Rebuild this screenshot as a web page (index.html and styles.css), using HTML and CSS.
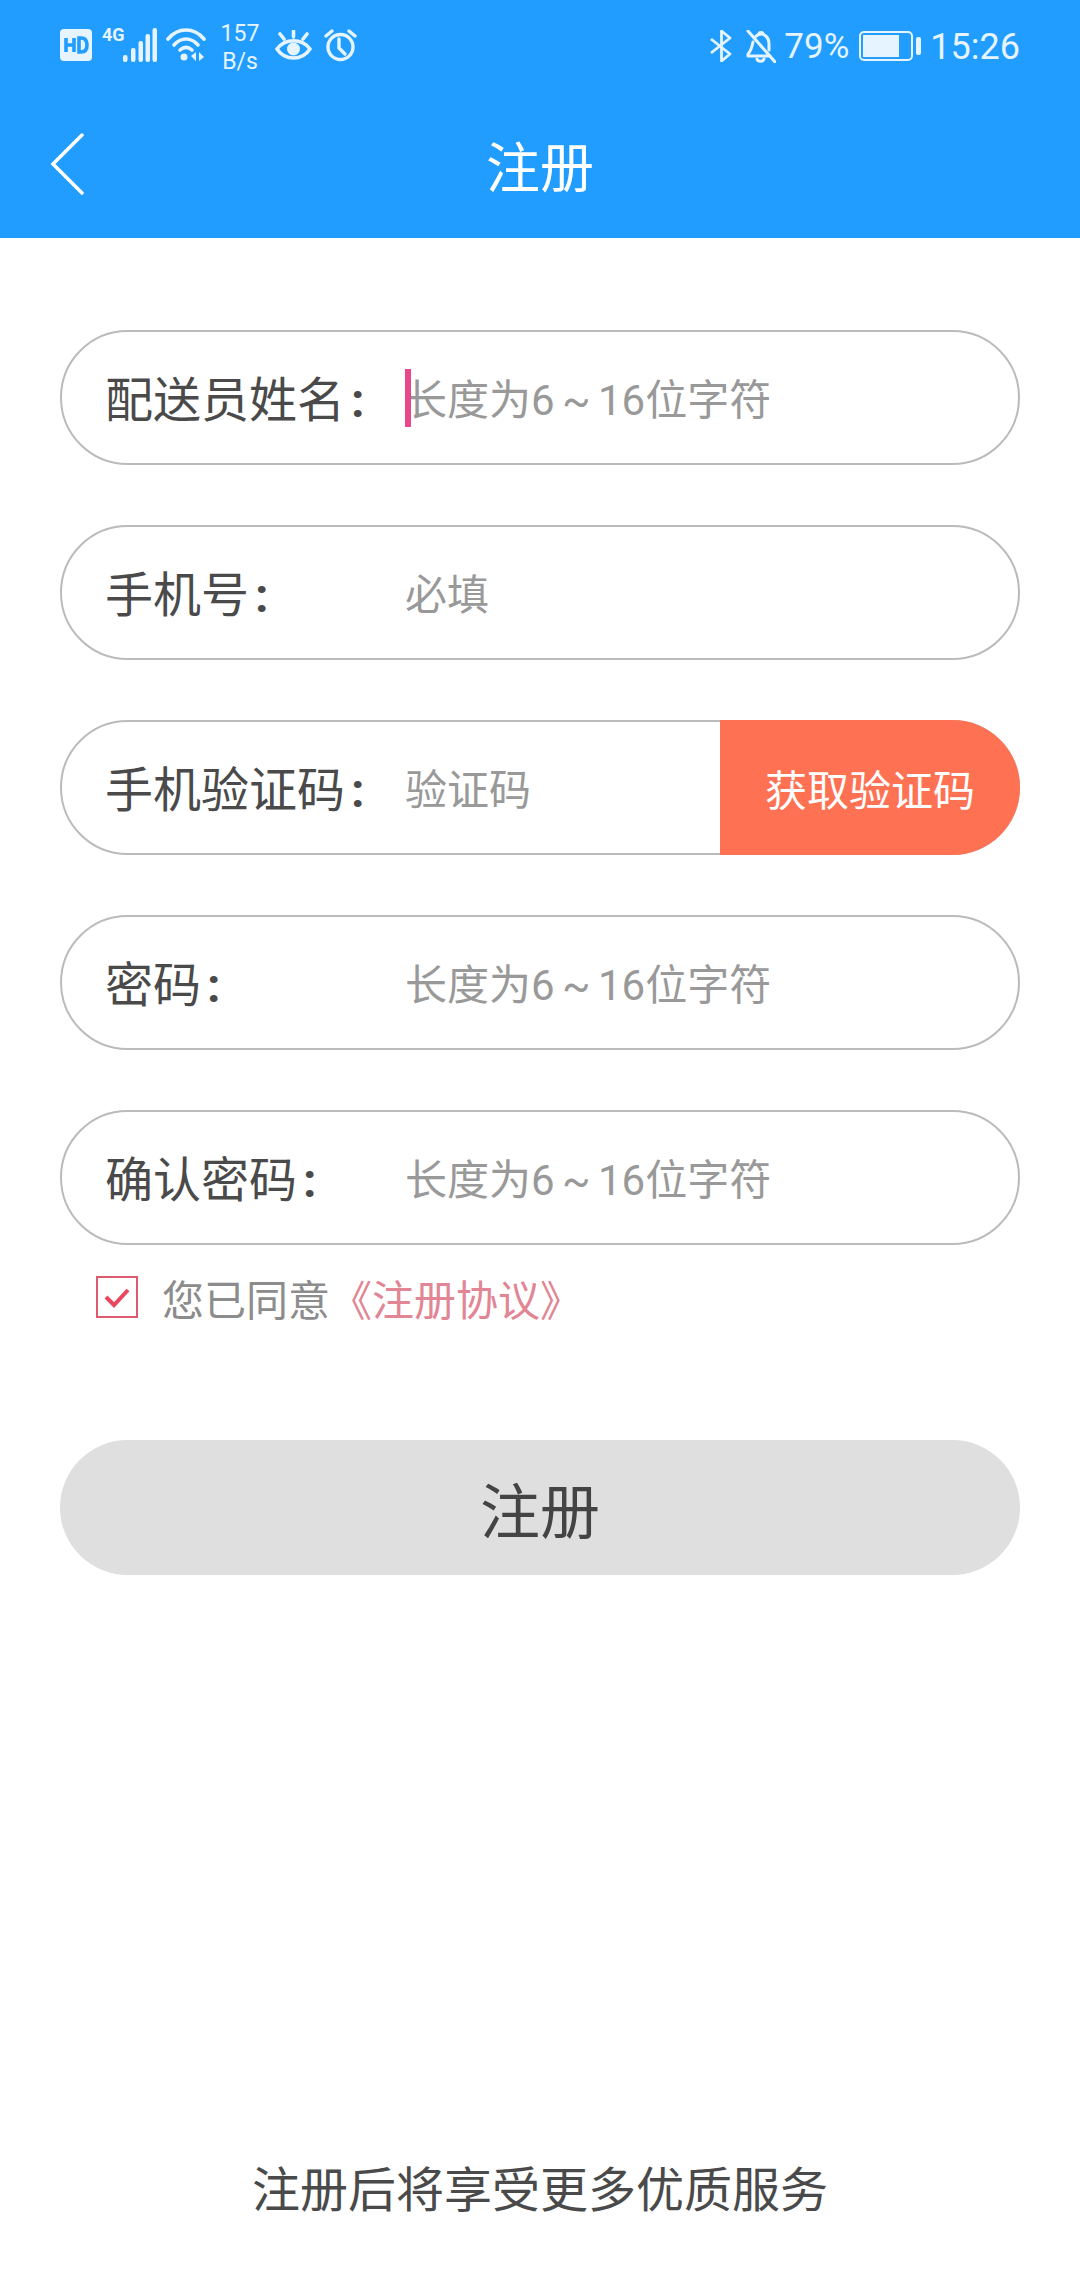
FILE: index.html
```html
<!DOCTYPE html>
<html lang="zh-CN">
<head>
    <meta charset="UTF-8">
    <meta name="viewport" content="width=device-width, initial-scale=1.0">
    <title>注册</title>
    <link rel="stylesheet" href="styles.css">
</head>
<body>
    <header class="top">
        <div class="status">
            <div class="status-left">
                <svg class="ic-hd" width="32" height="32" viewBox="0 0 32 32"><rect width="32" height="32" rx="4" fill="#e6f4ff"/><path d="M6 9v14M14 9v14M6 16h8" stroke="#209dff" stroke-width="3.600" fill="none"/><path d="M19 9v14h2c4 0 6-2.500 6-7s-2-7-6-7z" stroke="#209dff" stroke-width="3.600" fill="none"/></svg>
                <div class="net">
                    <span class="net-label">4G</span>
                    <svg width="35" height="34" viewBox="0 0 35 34"><g fill="#e6f4ff"><rect x="1" y="27" width="4.500" height="7" rx="2"/><rect x="9" y="20" width="4.500" height="14" rx="2"/><rect x="16.500" y="13" width="4.500" height="21" rx="2"/><rect x="23.500" y="6" width="4.500" height="28" rx="2"/><rect x="30.500" y="0" width="4.500" height="34" rx="2"/></g></svg>
                </div>
                <svg class="ic-wifi" width="40" height="34" viewBox="0 0 40 34"><g fill="none" stroke="#e6f4ff" stroke-width="3.600" stroke-linecap="round"><path d="M2 11C12 -1 28 -1 38 11"/><path d="M8 17c7-8 17-8 24 0"/><path d="M14 22c4-3.500 8-3.500 12 0"/></g><circle cx="18" cy="29" r="3.500" fill="#e6f4ff"/><path d="M30 24v9l-5-5zM33 24l5 5-5 4z" fill="#e6f4ff"/></svg>
                <div class="speed"><span>157</span><span>B/s</span></div>
                <svg class="ic-eye" width="37" height="33" viewBox="0 0 37 33"><g fill="none" stroke="#e6f4ff" stroke-width="3.600" stroke-linecap="round"><path d="M2 19C10 8 27 8 35 19C27 31 10 31 2 19z"/><path d="M18.500 1v6M5 4l4 5M32 4l-4 5"/></g><circle cx="18.500" cy="19" r="6.500" fill="#e6f4ff"/></svg>
                <svg class="ic-alarm" width="33" height="33" viewBox="0 0 33 33"><g fill="none" stroke="#e6f4ff" stroke-width="3.400" stroke-linecap="round"><circle cx="16.500" cy="18" r="12.500"/><path d="M15 10v9l6 6"/><path d="M2 7l6-5M31 7l-6-5"/></g></svg>
            </div>
            <div class="status-right">
                <svg class="ic-bt" width="22" height="32" viewBox="0 0 22 32"><path d="M1 9l19 15-8.500 7V1L20 8 1 23" fill="none" stroke="#e6f4ff" stroke-width="2.800" stroke-linejoin="round"/></svg>
                <svg class="ic-bell" width="30" height="33" viewBox="0 0 30 33"><g fill="none" stroke="#e6f4ff" stroke-width="3" stroke-linecap="round" stroke-linejoin="round"><path d="M9 7c2-2 4-3 6-3s8 2 8 10v6"/><path d="M7 12c-1 5-2 9-5 12v2h22"/><path d="M13 4c0-2 4-2 4 0"/><path d="M11 29c1 3 6 3 7 0"/><path d="M2 1l27 31"/></g></svg>
                <span class="pct">79%</span>
                <div class="battery">
                    <div class="battery-body"><div class="battery-fill"></div></div>
                    <div class="battery-nub"></div>
                </div>
                <span class="clock">15:26</span>
            </div>
        </div>
        <div class="nav">
            <svg class="back" width="34" height="62" viewBox="0 0 34 62"><path d="M32 2L3 31l29 29" fill="none" stroke="#fff" stroke-width="3.500" stroke-linecap="round"/></svg>
            <h1 class="nav-title">注册</h1>
        </div>
    </header>

    <form class="form">
        <div class="field">
            <label class="field-label">配送员姓名<span class="colon">:</span></label>
            <span class="field-hint"><i class="caret"></i>长度为6 ~ 16位字符</span>
        </div>
        <div class="field">
            <label class="field-label">手机号<span class="colon">:</span></label>
            <span class="field-hint">必填</span>
        </div>
        <div class="field">
            <label class="field-label">手机验证码<span class="colon">:</span></label>
            <span class="field-hint">验证码</span>
            <button type="button" class="code-btn">获取验证码</button>
        </div>
        <div class="field">
            <label class="field-label">密码<span class="colon">:</span></label>
            <span class="field-hint">长度为6 ~ 16位字符</span>
        </div>
        <div class="field">
            <label class="field-label">确认密码<span class="colon">:</span></label>
            <span class="field-hint">长度为6 ~ 16位字符</span>
        </div>
        <div class="agree">
            <svg width="42" height="42" viewBox="0 0 42 42"><rect x="1" y="1" width="40" height="40" fill="#fff" stroke="#dc5a6e" stroke-width="2"/><path d="M10 21l8 8 14-15" fill="none" stroke="#e8475f" stroke-width="4"/></svg>
            <span class="agree-text">您已同意<a class="agree-link"><span class="bracket">《</span>注册协议<span class="bracket">》</span></a></span>
        </div>
        <button type="button" class="submit">注册</button>
    </form>

    <p class="foot">注册后将享受更多优质服务</p>
</body>
</html>
```

FILE: styles.css
```css
* { box-sizing: border-box; }
html, body { margin: 0; padding: 0; }
body { width: 1080px; height: 2280px; background: #fff; font-family: Roboto, "Noto Sans CJK SC", sans-serif; display: flex; flex-direction: column; }

.top { background: #209dff; height: 238px; }

.status { height: 92px; padding: 0 60px; display: flex; justify-content: space-between; color: #e6f4ff; }
.status-left, .status-right { display: flex; align-items: flex-start; }
.status-left { padding-top: 28px; }
.status-right { padding-top: 30px; }
.ic-hd { margin-top: 1px; }
.net { position: relative; margin-left: 30px; width: 35px; height: 34px; }
.net-label { position: absolute; left: -20px; top: -3px; font-size: 18px; line-height: 20px; font-weight: 700; }
.ic-wifi { margin-left: 9px; }
.speed { margin-left: 16px; margin-top: -8px; width: 36px; display: flex; flex-direction: column; align-items: center; font-size: 23px; line-height: 28px; }
.ic-eye { margin-left: 17px; margin-top: 2px; }
.ic-alarm { margin-left: 12px; margin-top: 1px; }
.ic-bell { margin-left: 14px; }
.pct { margin-left: 8px; font-size: 35px; line-height: 34px; }
.battery { margin-left: 10px; display: flex; align-items: center; height: 30px; margin-top: 1px; }
.battery-body { width: 54px; height: 30px; border: 2px solid #e6f4ff; border-radius: 5px; padding: 2px; }
.battery-fill { width: 36px; height: 100%; background: #e6f4ff; }
.battery-nub { width: 5px; height: 18px; margin-left: 3px; background: #e6f4ff; border-radius: 2px; }
.clock { margin-left: 9px; font-size: 36px; line-height: 34px; }

.nav { position: relative; height: 146px; display: flex; align-items: center; justify-content: center; }
.back { position: absolute; left: 50px; top: 41px; }
.nav-title { margin: 10px 0 0; font-size: 54px; line-height: 70px; font-weight: 400; color: #fff; }

.form { padding: 92px 60px 0; display: flex; flex-direction: column; }
.field { position: relative; height: 135px; margin-bottom: 60px; border: 2px solid #bbb; border-radius: 68px; display: flex; align-items: center; padding-left: 43px; }
.field:nth-child(5) { margin-bottom: 0; }
.field-label { width: 300px; flex: none; margin-top: -3px; font-size: 48px; color: #4a4a4a; }
.colon { margin-left: 6px; font-weight: 700; }
.field-hint { position: relative; margin-top: -2px; font-size: 42px; word-spacing: -3px; color: #999; }
.caret { position: absolute; left: 0; top: 3px; width: 6px; height: 58px; background: #e8478a; }
.code-btn { position: absolute; right: -2px; top: -2px; height: 135px; width: 300px; padding: 0; border: none; border-radius: 0 68px 68px 0; background: #ff7153; color: #fff; font-family: inherit; font-size: 42px; }

.agree { display: flex; align-items: center; margin: 31px 0 0 36px; height: 42px; }
.agree-text { margin-left: 24px; font-size: 42px; color: #8c8c8c; white-space: nowrap; }
.agree-link { color: #e28594; }
.bracket { font-family: "Noto Sans CJK JP", sans-serif; }

.submit { margin-top: 122px; height: 135px; border: none; border-radius: 68px; background: #dfdfdf; color: #444; font-family: inherit; font-size: 60px; }

.foot { margin: auto 0 57px; text-align: center; font-size: 48px; line-height: 64px; color: #4a4a4a; }
```
